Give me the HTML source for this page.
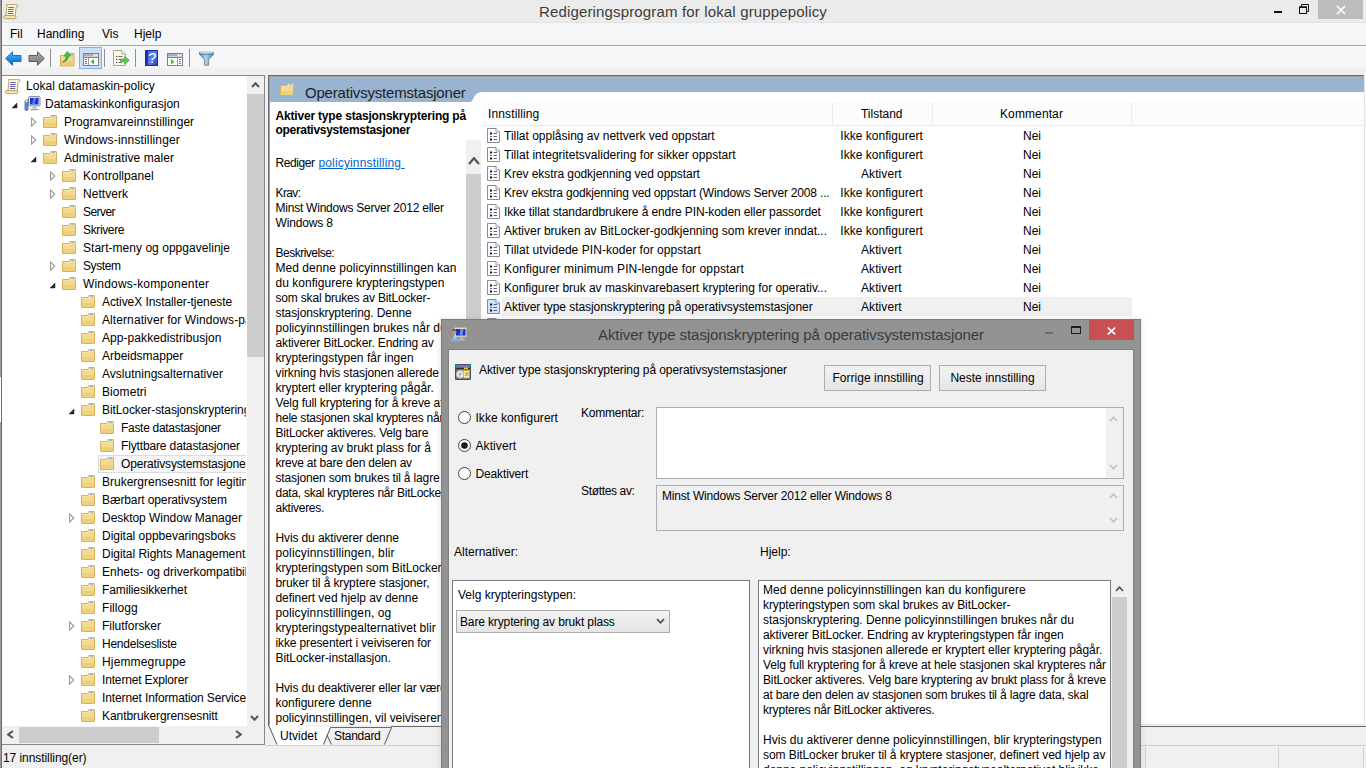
<!DOCTYPE html>
<html lang="nb"><head><meta charset="utf-8"><title>Redigeringsprogram for lokal gruppepolicy</title>
<style>
html,body{margin:0;padding:0;}
body{width:1366px;height:768px;overflow:hidden;position:relative;background:#fff;font-family:"Liberation Sans",sans-serif;font-size:12px;color:#000;}
div,span,svg{position:absolute;box-sizing:border-box;}
.t{white-space:pre;}
.clip{overflow:hidden;}
</style></head><body>
<div style="left:0px;top:0px;width:1366px;height:22px;background:#ebebeb;"></div>
<div style="left:0px;top:22px;width:1366px;height:1px;background:#e3e3e3;"></div>
<div style="left:0px;top:23px;width:1366px;height:22px;background:#f5f6f7;"></div>
<div style="left:0px;top:45px;width:1366px;height:1px;background:#ababab;"></div>
<div style="left:0px;top:46px;width:1366px;height:22px;background:#f5f6f7;"></div>
<div style="left:0px;top:68px;width:1366px;height:7px;background:#f0f0f0;"></div>
<div style="left:0px;top:75px;width:1366px;height:693px;background:#f0f0f0;"></div>
<span class="t" style="left:539px;top:2px;font-size:15px;line-height:20px;color:#3c3c3c;letter-spacing:0.151px;">Redigeringsprogram for lokal gruppepolicy</span>
<div style="left:1318px;top:0px;width:45px;height:19px;background:#bcbcbc;"></div>
<svg style="left:1336px;top:5px" width="10" height="10" viewBox="0 0 10 10"><path d="M1 1l8 8M9 1l-8 8" stroke="#fff" stroke-width="1.7" fill="none"/></svg>
<svg style="left:1298px;top:3px" width="12" height="12" viewBox="0 0 12 12"><path d="M3.5 3.5v-2h7v7h-2" stroke="#111" stroke-width="1" fill="none"/><rect x="1.5" y="4" width="7" height="6.5" stroke="#111" stroke-width="1" fill="none"/><rect x="1" y="3.5" width="8" height="1.5" fill="#111"/></svg>
<div style="left:1274px;top:11px;width:8px;height:2px;background:#111;"></div>
<span class="t" style="left:10px;top:26px;font-size:12px;line-height:16px;">Fil</span>
<span class="t" style="left:37px;top:26px;font-size:12px;line-height:16px;">Handling</span>
<span class="t" style="left:102px;top:26px;font-size:12px;line-height:16px;">Vis</span>
<span class="t" style="left:134px;top:26px;font-size:12px;line-height:16px;">Hjelp</span>
<svg style="left:3px;top:4px" width="16" height="16" viewBox="0 0 16 16"><path d="M3.600 .6h10.300c1.500 0 1.500 2.300 .1 2.300h-.9l-.9 9.200h-9.300l.9-9.600c.1-.8 .2-1.400-.2-1.900z" fill="#fdf7dc" stroke="#b39c5e" stroke-width=".9"/><path d="M1.800 11.600h10.200c1.300 0 1.300 3 0 3h-10.200c-1.500 0-1.500-3 0-3z" fill="#f6e9b4" stroke="#b39c5e" stroke-width=".9"/><path d="M5.300 3.500h5.500M5.200 5.500h5.500M5 7.500h5.500M4.800 9.500h5.500" stroke="#6662a6" stroke-width="1"/></svg>
<svg style="left:5px;top:51px" width="17" height="15" viewBox="0 0 17 15"><defs><linearGradient id="gb" x1="0" y1="0" x2="0" y2="1"><stop offset="0" stop-color="#56bdf6"/><stop offset=".5" stop-color="#1c8fe6"/><stop offset="1" stop-color="#0d63c6"/></linearGradient></defs><path d="M7.500 .8v3.700h8.500v6h-8.500v3.700l-6.800-6.700z" fill="url(#gb)" stroke="#1b6fc8" stroke-width="1" stroke-linejoin="round"/></svg>
<svg style="left:28px;top:51px" width="17" height="15" viewBox="0 0 17 15"><defs><linearGradient id="gg" x1="0" y1="0" x2="0" y2="1"><stop offset="0" stop-color="#a9a9a9"/><stop offset="1" stop-color="#7a7a7a"/></linearGradient></defs><path d="M9.500 .8v3.700h-8.500v6h8.500v3.700l6.800-6.700z" fill="url(#gg)" stroke="#5c5c5c" stroke-width="1" stroke-linejoin="round"/></svg>
<div style="left:50px;top:49px;width:1px;height:18px;background:#8f8f8f;"></div>
<div style="left:104px;top:49px;width:1px;height:18px;background:#8f8f8f;"></div>
<div style="left:135px;top:49px;width:1px;height:18px;background:#8f8f8f;"></div>
<div style="left:189px;top:49px;width:1px;height:18px;background:#8f8f8f;"></div>
<svg style="left:60px;top:50px" width="15" height="17" viewBox="0 0 15 17"><path d="M.5 5.500h6.500l1.200-2h5.800v12.500h-13.500z" fill="#f3d98e" stroke="#d3ad56"/><path d="M1 11h13v4.500h-13z" fill="#e9c364" opacity=".6"/><rect x="10" y="4.300" width="3" height="1.200" fill="#7db1e6"/><path d="M2.500 12c2.500-1 3.500-3.500 3.700-6h-2.200l3.300-4.500 3.200 4.500h-2c-.3 3.500-2.500 6-6 6z" fill="#46c33a" stroke="#2a9a22" stroke-width=".7"/></svg>
<div style="left:79px;top:47px;width:23px;height:22px;background:#cbe0f8;border:1px solid #7fb0ea;"></div>
<svg style="left:83px;top:53px" width="16" height="13" viewBox="0 0 16 13"><rect x=".5" y=".5" width="15" height="12" fill="#fff" stroke="#80808a"/><rect x="1" y="1" width="14" height="3" fill="#d0d0d6"/><path d="M1 2h9" stroke="#8a8a94"/><path d="M1 4.500h14" stroke="#80808a"/><rect x="11" y="1.500" width="1.200" height="1.200" fill="#fff"/><rect x="13" y="1.500" width="1.200" height="1.200" fill="#fff"/><path d="M5.500 5v7" stroke="#9a9aa2"/><path d="M2 6.500h2M2 8.500h2M2 10.500h2" stroke="#3f78d8" stroke-width="1"/><path d="M11 6l-3.500 2.700 3.500 2.700z" fill="#3fbf34"/></svg>
<svg style="left:113px;top:50px" width="17" height="16" viewBox="0 0 17 16"><path d="M.5 .5h8.500l3.500 3.500v11.500h-12z" fill="#fbf6dd" stroke="#a8a493"/><path d="M9 .5v3.500h3.500" fill="#fff" stroke="#a8a493" stroke-width=".9"/><path d="M3 6.500h1.200M3 9.500h1.200M3 12.500h1.200" stroke="#333" stroke-width="1.200"/><path d="M5.500 6.500h4M5.500 9.500h2M5.500 12.500h3.500" stroke="#6d6aa8" stroke-width="1"/><path d="M7.500 9h4.200v-2.300l4.600 3.600-4.600 3.600v-2.300h-4.200z" fill="#5ccb4c" stroke="#35a52b" stroke-width=".7"/></svg>
<svg style="left:145px;top:50px" width="13" height="16" viewBox="0 0 13 16"><defs><linearGradient id="gh" x1="0" y1="0" x2="1" y2="1"><stop offset="0" stop-color="#3a5ce0"/><stop offset=".55" stop-color="#5f7ff0"/><stop offset="1" stop-color="#2238b4"/></linearGradient></defs><rect x=".5" y=".5" width="12" height="15" fill="url(#gh)" stroke="#1c2c98"/><rect x="1" y="1" width="2" height="14" fill="#1f34a8"/><text x="7.400" y="13" font-family="Liberation Sans, sans-serif" font-size="14.500" fill="#fff" text-anchor="middle">?</text></svg>
<svg style="left:167px;top:53px" width="16" height="13" viewBox="0 0 16 13"><rect x=".5" y=".5" width="15" height="12" fill="#fff" stroke="#80808a"/><rect x="1" y="1" width="14" height="3" fill="#d0d0d6"/><path d="M1 2h9" stroke="#8a8a94"/><path d="M1 4.500h14" stroke="#80808a"/><rect x="11" y="1.500" width="1.200" height="1.200" fill="#fff"/><rect x="13" y="1.500" width="1.200" height="1.200" fill="#fff"/><path d="M10.500 5v7" stroke="#9a9aa2"/><path d="M12 6.500h2M12 8.500h2M12 10.500h2" stroke="#3f78d8" stroke-width="1"/><path d="M4 6l3.500 2.700-3.500 2.700z" fill="#3fbf34"/></svg>
<svg style="left:199px;top:51px" width="15" height="15" viewBox="0 0 15 15"><defs><linearGradient id="gf" x1="0" y1="0" x2="1" y2="0"><stop offset="0" stop-color="#5588ad"/><stop offset=".45" stop-color="#b4d0e4"/><stop offset="1" stop-color="#4f80a6"/></linearGradient></defs><path d="M.4 1.200h14.200v2l-5 5.300v5.700h-4.200v-5.700l-5-5.300z" fill="url(#gf)" stroke="#54809f" stroke-width=".8" stroke-linejoin="round"/><path d="M1 1.800h13" stroke="#e4eef6" stroke-width="1"/><path d="M.8 3.300h13.400" stroke="#4f7c9c" stroke-width=".8"/></svg>
<div style="left:0px;top:0px;width:1px;height:768px;background:#9a9a9a;"></div>
<div style="left:1px;top:0px;width:1px;height:768px;background:#6c6c6c;"></div>
<div style="left:0px;top:377px;width:1px;height:45px;background:#fff;"></div>
<div style="left:2px;top:75px;width:263px;height:1px;background:#828790;"></div>
<div style="left:2px;top:76px;width:262px;height:668px;background:#fff;"></div>
<div style="left:264px;top:76px;width:1px;height:669px;background:#828790;"></div>
<div style="left:2px;top:744px;width:263px;height:1px;background:#828790;"></div>
<div class="clip" style="left:2px;top:76px;width:244px;height:650px;">
<svg style="left:3px;top:3px" width="16" height="16" viewBox="0 0 16 16"><path d="M3.600 .6h10.300c1.500 0 1.500 2.300 .1 2.300h-.9l-.9 9.200h-9.300l.9-9.600c.1-.8 .2-1.400-.2-1.900z" fill="#fdf7dc" stroke="#b39c5e" stroke-width=".9"/><path d="M1.800 11.600h10.200c1.300 0 1.300 3 0 3h-10.200c-1.500 0-1.500-3 0-3z" fill="#f6e9b4" stroke="#b39c5e" stroke-width=".9"/><path d="M5.300 3.500h5.500M5.200 5.500h5.500M5 7.500h5.500M4.800 9.500h5.500" stroke="#6662a6" stroke-width="1"/></svg>
<span class="t" style="left:24px;top:2px;font-size:12px;line-height:16px;letter-spacing:0.028px;">Lokal datamaskin-policy</span>
<svg style="left:9px;top:26px" width="7" height="7" viewBox="0 0 7 7"><path d="M6 1v5h-5z" fill="#262626" stroke="#262626" stroke-width=".5"/></svg>
<svg style="left:22px;top:20px" width="17" height="16" viewBox="0 0 17 16"><rect x="4.500" y=".5" width="11.500" height="9.500" rx="1" fill="#d9dde2" stroke="#8a9098"/><rect x="6" y="2" width="8.500" height="6.500" fill="#1738d8"/><path d="M9.500 2h2.500l-1.500 6.500h-2.500z" fill="#6f8df5" opacity=".8"/><path d="M8.500 10.500h4v2h-4z" fill="#b9bec5"/><path d="M6.500 13.500h8" stroke="#9aa0a8" stroke-width="1.500"/><rect x="1" y="4.500" width="3" height="10" rx="1.300" fill="#5b8fdc" stroke="#3a66b0" stroke-width=".8"/><circle cx="2.500" cy="5" r="1.500" fill="#e8e8e8" stroke="#777" stroke-width=".6"/></svg>
<span class="t" style="left:43px;top:20px;font-size:12px;line-height:16px;">Datamaskinkonfigurasjon</span>
<svg style="left:29px;top:41px" width="6" height="10" viewBox="0 0 6 10"><path d="M.6 .9l4.200 4.100-4.200 4.100z" fill="#fff" stroke="#989898" stroke-width="1.100"/></svg>
<svg style="left:41px;top:39px" width="14" height="13" viewBox="0 0 14 13"><path d="M.5 2.500h6.200l1.200-2h5.100c.3 0 .5.200.5.500v11c0 .3-.2.500-.5.500h-12c-.3 0-.5-.2-.5-.5z" fill="#f3da90" stroke="#d6b25a" stroke-width="1"/><path d="M1.500 3.500h5.700l1.200-2h4.100v1.500h-11z" fill="#fbefc0"/><rect x="9" y="1.200" width="3" height="1.200" fill="#8ab9ea"/><path d="M1 8h12v4h-12z" fill="#eac566" opacity=".5"/></svg>
<span class="t" style="left:62px;top:38px;font-size:12px;line-height:16px;letter-spacing:0.030px;">Programvareinnstillinger</span>
<svg style="left:29px;top:59px" width="6" height="10" viewBox="0 0 6 10"><path d="M.6 .9l4.200 4.100-4.200 4.100z" fill="#fff" stroke="#989898" stroke-width="1.100"/></svg>
<svg style="left:41px;top:57px" width="14" height="13" viewBox="0 0 14 13"><path d="M.5 2.500h6.200l1.200-2h5.100c.3 0 .5.200.5.500v11c0 .3-.2.500-.5.500h-12c-.3 0-.5-.2-.5-.5z" fill="#f3da90" stroke="#d6b25a" stroke-width="1"/><path d="M1.500 3.500h5.700l1.200-2h4.100v1.500h-11z" fill="#fbefc0"/><rect x="9" y="1.200" width="3" height="1.200" fill="#8ab9ea"/><path d="M1 8h12v4h-12z" fill="#eac566" opacity=".5"/></svg>
<span class="t" style="left:62px;top:56px;font-size:12px;line-height:16px;letter-spacing:0.156px;">Windows-innstillinger</span>
<svg style="left:28px;top:80px" width="7" height="7" viewBox="0 0 7 7"><path d="M6 1v5h-5z" fill="#262626" stroke="#262626" stroke-width=".5"/></svg>
<svg style="left:41px;top:75px" width="14" height="13" viewBox="0 0 14 13"><path d="M.5 2.500h6.200l1.200-2h5.100c.3 0 .5.200.5.500v11c0 .3-.2.500-.5.500h-12c-.3 0-.5-.2-.5-.5z" fill="#f3da90" stroke="#d6b25a" stroke-width="1"/><path d="M1.500 3.500h5.700l1.200-2h4.100v1.500h-11z" fill="#fbefc0"/><rect x="9" y="1.200" width="3" height="1.200" fill="#8ab9ea"/><path d="M1 8h12v4h-12z" fill="#eac566" opacity=".5"/></svg>
<span class="t" style="left:62px;top:74px;font-size:12px;line-height:16px;letter-spacing:0.065px;">Administrative maler</span>
<svg style="left:48px;top:95px" width="6" height="10" viewBox="0 0 6 10"><path d="M.6 .9l4.200 4.100-4.200 4.100z" fill="#fff" stroke="#989898" stroke-width="1.100"/></svg>
<svg style="left:60px;top:93px" width="14" height="13" viewBox="0 0 14 13"><path d="M.5 2.500h6.200l1.200-2h5.100c.3 0 .5.200.5.500v11c0 .3-.2.500-.5.500h-12c-.3 0-.5-.2-.5-.5z" fill="#f3da90" stroke="#d6b25a" stroke-width="1"/><path d="M1.500 3.500h5.700l1.200-2h4.100v1.500h-11z" fill="#fbefc0"/><rect x="9" y="1.200" width="3" height="1.200" fill="#8ab9ea"/><path d="M1 8h12v4h-12z" fill="#eac566" opacity=".5"/></svg>
<span class="t" style="left:81px;top:92px;font-size:12px;line-height:16px;letter-spacing:0.049px;">Kontrollpanel</span>
<svg style="left:48px;top:113px" width="6" height="10" viewBox="0 0 6 10"><path d="M.6 .9l4.200 4.100-4.200 4.100z" fill="#fff" stroke="#989898" stroke-width="1.100"/></svg>
<svg style="left:60px;top:111px" width="14" height="13" viewBox="0 0 14 13"><path d="M.5 2.500h6.200l1.200-2h5.100c.3 0 .5.200.5.500v11c0 .3-.2.500-.5.500h-12c-.3 0-.5-.2-.5-.5z" fill="#f3da90" stroke="#d6b25a" stroke-width="1"/><path d="M1.500 3.500h5.700l1.200-2h4.100v1.500h-11z" fill="#fbefc0"/><rect x="9" y="1.200" width="3" height="1.200" fill="#8ab9ea"/><path d="M1 8h12v4h-12z" fill="#eac566" opacity=".5"/></svg>
<span class="t" style="left:81px;top:110px;font-size:12px;line-height:16px;letter-spacing:0.039px;">Nettverk</span>
<svg style="left:60px;top:129px" width="14" height="13" viewBox="0 0 14 13"><path d="M.5 2.500h6.200l1.200-2h5.100c.3 0 .5.200.5.500v11c0 .3-.2.500-.5.500h-12c-.3 0-.5-.2-.5-.5z" fill="#f3da90" stroke="#d6b25a" stroke-width="1"/><path d="M1.500 3.500h5.700l1.200-2h4.100v1.500h-11z" fill="#fbefc0"/><rect x="9" y="1.200" width="3" height="1.200" fill="#8ab9ea"/><path d="M1 8h12v4h-12z" fill="#eac566" opacity=".5"/></svg>
<span class="t" style="left:81px;top:128px;font-size:12px;line-height:16px;letter-spacing:-0.557px;">Server</span>
<svg style="left:60px;top:147px" width="14" height="13" viewBox="0 0 14 13"><path d="M.5 2.500h6.200l1.200-2h5.100c.3 0 .5.200.5.500v11c0 .3-.2.500-.5.500h-12c-.3 0-.5-.2-.5-.5z" fill="#f3da90" stroke="#d6b25a" stroke-width="1"/><path d="M1.500 3.500h5.700l1.200-2h4.100v1.500h-11z" fill="#fbefc0"/><rect x="9" y="1.200" width="3" height="1.200" fill="#8ab9ea"/><path d="M1 8h12v4h-12z" fill="#eac566" opacity=".5"/></svg>
<span class="t" style="left:81px;top:146px;font-size:12px;line-height:16px;letter-spacing:-0.364px;">Skrivere</span>
<svg style="left:60px;top:165px" width="14" height="13" viewBox="0 0 14 13"><path d="M.5 2.500h6.200l1.200-2h5.100c.3 0 .5.200.5.500v11c0 .3-.2.500-.5.500h-12c-.3 0-.5-.2-.5-.5z" fill="#f3da90" stroke="#d6b25a" stroke-width="1"/><path d="M1.500 3.500h5.700l1.200-2h4.100v1.500h-11z" fill="#fbefc0"/><rect x="9" y="1.200" width="3" height="1.200" fill="#8ab9ea"/><path d="M1 8h12v4h-12z" fill="#eac566" opacity=".5"/></svg>
<span class="t" style="left:81px;top:164px;font-size:12px;line-height:16px;letter-spacing:0.035px;">Start-meny og oppgavelinje</span>
<svg style="left:48px;top:185px" width="6" height="10" viewBox="0 0 6 10"><path d="M.6 .9l4.200 4.100-4.200 4.100z" fill="#fff" stroke="#989898" stroke-width="1.100"/></svg>
<svg style="left:60px;top:183px" width="14" height="13" viewBox="0 0 14 13"><path d="M.5 2.500h6.200l1.200-2h5.100c.3 0 .5.200.5.500v11c0 .3-.2.500-.5.500h-12c-.3 0-.5-.2-.5-.5z" fill="#f3da90" stroke="#d6b25a" stroke-width="1"/><path d="M1.500 3.500h5.700l1.200-2h4.100v1.500h-11z" fill="#fbefc0"/><rect x="9" y="1.200" width="3" height="1.200" fill="#8ab9ea"/><path d="M1 8h12v4h-12z" fill="#eac566" opacity=".5"/></svg>
<span class="t" style="left:81px;top:182px;font-size:12px;line-height:16px;letter-spacing:-0.403px;">System</span>
<svg style="left:47px;top:206px" width="7" height="7" viewBox="0 0 7 7"><path d="M6 1v5h-5z" fill="#262626" stroke="#262626" stroke-width=".5"/></svg>
<svg style="left:60px;top:201px" width="14" height="13" viewBox="0 0 14 13"><path d="M.5 2.500h6.200l1.200-2h5.100c.3 0 .5.200.5.500v11c0 .3-.2.500-.5.500h-12c-.3 0-.5-.2-.5-.5z" fill="#f3da90" stroke="#d6b25a" stroke-width="1"/><path d="M1.500 3.500h5.700l1.200-2h4.100v1.500h-11z" fill="#fbefc0"/><rect x="9" y="1.200" width="3" height="1.200" fill="#8ab9ea"/><path d="M1 8h12v4h-12z" fill="#eac566" opacity=".5"/></svg>
<span class="t" style="left:81px;top:200px;font-size:12px;line-height:16px;letter-spacing:0.183px;">Windows-komponenter</span>
<svg style="left:79px;top:219px" width="14" height="13" viewBox="0 0 14 13"><path d="M.5 2.500h6.200l1.200-2h5.100c.3 0 .5.200.5.500v11c0 .3-.2.500-.5.500h-12c-.3 0-.5-.2-.5-.5z" fill="#f3da90" stroke="#d6b25a" stroke-width="1"/><path d="M1.500 3.500h5.700l1.200-2h4.100v1.500h-11z" fill="#fbefc0"/><rect x="9" y="1.200" width="3" height="1.200" fill="#8ab9ea"/><path d="M1 8h12v4h-12z" fill="#eac566" opacity=".5"/></svg>
<span class="t" style="left:100px;top:218px;font-size:12px;line-height:16px;letter-spacing:-0.079px;">ActiveX Installer-tjeneste</span>
<svg style="left:79px;top:237px" width="14" height="13" viewBox="0 0 14 13"><path d="M.5 2.500h6.200l1.200-2h5.100c.3 0 .5.200.5.500v11c0 .3-.2.500-.5.500h-12c-.3 0-.5-.2-.5-.5z" fill="#f3da90" stroke="#d6b25a" stroke-width="1"/><path d="M1.500 3.500h5.700l1.200-2h4.100v1.500h-11z" fill="#fbefc0"/><rect x="9" y="1.200" width="3" height="1.200" fill="#8ab9ea"/><path d="M1 8h12v4h-12z" fill="#eac566" opacity=".5"/></svg>
<span class="t" style="left:100px;top:236px;font-size:12px;line-height:16px;letter-spacing:0.088px;">Alternativer for Windows-påloggingsinformasjon</span>
<svg style="left:79px;top:255px" width="14" height="13" viewBox="0 0 14 13"><path d="M.5 2.500h6.200l1.200-2h5.100c.3 0 .5.200.5.500v11c0 .3-.2.500-.5.500h-12c-.3 0-.5-.2-.5-.5z" fill="#f3da90" stroke="#d6b25a" stroke-width="1"/><path d="M1.500 3.500h5.700l1.200-2h4.100v1.500h-11z" fill="#fbefc0"/><rect x="9" y="1.200" width="3" height="1.200" fill="#8ab9ea"/><path d="M1 8h12v4h-12z" fill="#eac566" opacity=".5"/></svg>
<span class="t" style="left:100px;top:254px;font-size:12px;line-height:16px;letter-spacing:0.068px;">App-pakkedistribusjon</span>
<svg style="left:79px;top:273px" width="14" height="13" viewBox="0 0 14 13"><path d="M.5 2.500h6.200l1.200-2h5.100c.3 0 .5.200.5.500v11c0 .3-.2.500-.5.500h-12c-.3 0-.5-.2-.5-.5z" fill="#f3da90" stroke="#d6b25a" stroke-width="1"/><path d="M1.500 3.500h5.700l1.200-2h4.100v1.500h-11z" fill="#fbefc0"/><rect x="9" y="1.200" width="3" height="1.200" fill="#8ab9ea"/><path d="M1 8h12v4h-12z" fill="#eac566" opacity=".5"/></svg>
<span class="t" style="left:100px;top:272px;font-size:12px;line-height:16px;letter-spacing:-0.013px;">Arbeidsmapper</span>
<svg style="left:79px;top:291px" width="14" height="13" viewBox="0 0 14 13"><path d="M.5 2.500h6.200l1.200-2h5.100c.3 0 .5.200.5.500v11c0 .3-.2.500-.5.500h-12c-.3 0-.5-.2-.5-.5z" fill="#f3da90" stroke="#d6b25a" stroke-width="1"/><path d="M1.500 3.500h5.700l1.200-2h4.100v1.500h-11z" fill="#fbefc0"/><rect x="9" y="1.200" width="3" height="1.200" fill="#8ab9ea"/><path d="M1 8h12v4h-12z" fill="#eac566" opacity=".5"/></svg>
<span class="t" style="left:100px;top:290px;font-size:12px;line-height:16px;letter-spacing:0.017px;">Avslutningsalternativer</span>
<svg style="left:79px;top:309px" width="14" height="13" viewBox="0 0 14 13"><path d="M.5 2.500h6.200l1.200-2h5.100c.3 0 .5.200.5.500v11c0 .3-.2.500-.5.500h-12c-.3 0-.5-.2-.5-.5z" fill="#f3da90" stroke="#d6b25a" stroke-width="1"/><path d="M1.500 3.500h5.700l1.200-2h4.100v1.500h-11z" fill="#fbefc0"/><rect x="9" y="1.200" width="3" height="1.200" fill="#8ab9ea"/><path d="M1 8h12v4h-12z" fill="#eac566" opacity=".5"/></svg>
<span class="t" style="left:100px;top:308px;font-size:12px;line-height:16px;letter-spacing:0.073px;">Biometri</span>
<svg style="left:66px;top:332px" width="7" height="7" viewBox="0 0 7 7"><path d="M6 1v5h-5z" fill="#262626" stroke="#262626" stroke-width=".5"/></svg>
<svg style="left:79px;top:327px" width="14" height="13" viewBox="0 0 14 13"><path d="M.5 2.500h6.200l1.200-2h5.100c.3 0 .5.200.5.500v11c0 .3-.2.500-.5.500h-12c-.3 0-.5-.2-.5-.5z" fill="#f3da90" stroke="#d6b25a" stroke-width="1"/><path d="M1.500 3.500h5.700l1.200-2h4.100v1.500h-11z" fill="#fbefc0"/><rect x="9" y="1.200" width="3" height="1.200" fill="#8ab9ea"/><path d="M1 8h12v4h-12z" fill="#eac566" opacity=".5"/></svg>
<span class="t" style="left:100px;top:326px;font-size:12px;line-height:16px;letter-spacing:-0.088px;">BitLocker-stasjonskryptering</span>
<svg style="left:98px;top:345px" width="14" height="13" viewBox="0 0 14 13"><path d="M.5 2.500h6.200l1.200-2h5.100c.3 0 .5.200.5.500v11c0 .3-.2.500-.5.500h-12c-.3 0-.5-.2-.5-.5z" fill="#f3da90" stroke="#d6b25a" stroke-width="1"/><path d="M1.500 3.500h5.700l1.200-2h4.100v1.500h-11z" fill="#fbefc0"/><rect x="9" y="1.200" width="3" height="1.200" fill="#8ab9ea"/><path d="M1 8h12v4h-12z" fill="#eac566" opacity=".5"/></svg>
<span class="t" style="left:119px;top:344px;font-size:12px;line-height:16px;letter-spacing:-0.295px;">Faste datastasjoner</span>
<svg style="left:98px;top:363px" width="14" height="13" viewBox="0 0 14 13"><path d="M.5 2.500h6.200l1.200-2h5.100c.3 0 .5.200.5.500v11c0 .3-.2.500-.5.500h-12c-.3 0-.5-.2-.5-.5z" fill="#f3da90" stroke="#d6b25a" stroke-width="1"/><path d="M1.500 3.500h5.700l1.200-2h4.100v1.500h-11z" fill="#fbefc0"/><rect x="9" y="1.200" width="3" height="1.200" fill="#8ab9ea"/><path d="M1 8h12v4h-12z" fill="#eac566" opacity=".5"/></svg>
<span class="t" style="left:119px;top:362px;font-size:12px;line-height:16px;letter-spacing:-0.142px;">Flyttbare datastasjoner</span>
<div style="left:96px;top:379px;width:200px;height:18px;background:#f6f6f6;border:1px solid #dcdcdc;"></div>
<svg style="left:98px;top:381px" width="14" height="13" viewBox="0 0 14 13"><path d="M.5 2.500h6.200l1.200-2h5.100c.3 0 .5.200.5.500v11c0 .3-.2.500-.5.500h-12c-.3 0-.5-.2-.5-.5z" fill="#f3da90" stroke="#d6b25a" stroke-width="1"/><path d="M1.500 3.500h5.700l1.200-2h4.100v1.500h-11z" fill="#fbefc0"/><rect x="9" y="1.200" width="3" height="1.200" fill="#8ab9ea"/><path d="M1 8h12v4h-12z" fill="#eac566" opacity=".5"/></svg>
<span class="t" style="left:119px;top:380px;font-size:12px;line-height:16px;letter-spacing:-0.162px;">Operativsystemstasjoner</span>
<svg style="left:79px;top:399px" width="14" height="13" viewBox="0 0 14 13"><path d="M.5 2.500h6.200l1.200-2h5.100c.3 0 .5.200.5.500v11c0 .3-.2.500-.5.500h-12c-.3 0-.5-.2-.5-.5z" fill="#f3da90" stroke="#d6b25a" stroke-width="1"/><path d="M1.500 3.500h5.700l1.200-2h4.100v1.500h-11z" fill="#fbefc0"/><rect x="9" y="1.200" width="3" height="1.200" fill="#8ab9ea"/><path d="M1 8h12v4h-12z" fill="#eac566" opacity=".5"/></svg>
<span class="t" style="left:100px;top:398px;font-size:12px;line-height:16px;">Brukergrensesnitt for legitimasjon</span>
<svg style="left:79px;top:417px" width="14" height="13" viewBox="0 0 14 13"><path d="M.5 2.500h6.200l1.200-2h5.100c.3 0 .5.200.5.500v11c0 .3-.2.500-.5.500h-12c-.3 0-.5-.2-.5-.5z" fill="#f3da90" stroke="#d6b25a" stroke-width="1"/><path d="M1.500 3.500h5.700l1.200-2h4.100v1.500h-11z" fill="#fbefc0"/><rect x="9" y="1.200" width="3" height="1.200" fill="#8ab9ea"/><path d="M1 8h12v4h-12z" fill="#eac566" opacity=".5"/></svg>
<span class="t" style="left:100px;top:416px;font-size:12px;line-height:16px;letter-spacing:-0.118px;">Bærbart operativsystem</span>
<svg style="left:67px;top:437px" width="6" height="10" viewBox="0 0 6 10"><path d="M.6 .9l4.200 4.100-4.200 4.100z" fill="#fff" stroke="#989898" stroke-width="1.100"/></svg>
<svg style="left:79px;top:435px" width="14" height="13" viewBox="0 0 14 13"><path d="M.5 2.500h6.200l1.200-2h5.100c.3 0 .5.200.5.500v11c0 .3-.2.500-.5.500h-12c-.3 0-.5-.2-.5-.5z" fill="#f3da90" stroke="#d6b25a" stroke-width="1"/><path d="M1.500 3.500h5.700l1.200-2h4.100v1.500h-11z" fill="#fbefc0"/><rect x="9" y="1.200" width="3" height="1.200" fill="#8ab9ea"/><path d="M1 8h12v4h-12z" fill="#eac566" opacity=".5"/></svg>
<span class="t" style="left:100px;top:434px;font-size:12px;line-height:16px;letter-spacing:-0.038px;">Desktop Window Manager</span>
<svg style="left:79px;top:453px" width="14" height="13" viewBox="0 0 14 13"><path d="M.5 2.500h6.200l1.200-2h5.100c.3 0 .5.200.5.500v11c0 .3-.2.500-.5.500h-12c-.3 0-.5-.2-.5-.5z" fill="#f3da90" stroke="#d6b25a" stroke-width="1"/><path d="M1.500 3.500h5.700l1.200-2h4.100v1.500h-11z" fill="#fbefc0"/><rect x="9" y="1.200" width="3" height="1.200" fill="#8ab9ea"/><path d="M1 8h12v4h-12z" fill="#eac566" opacity=".5"/></svg>
<span class="t" style="left:100px;top:452px;font-size:12px;line-height:16px;letter-spacing:-0.012px;">Digital oppbevaringsboks</span>
<svg style="left:79px;top:471px" width="14" height="13" viewBox="0 0 14 13"><path d="M.5 2.500h6.200l1.200-2h5.100c.3 0 .5.200.5.500v11c0 .3-.2.500-.5.500h-12c-.3 0-.5-.2-.5-.5z" fill="#f3da90" stroke="#d6b25a" stroke-width="1"/><path d="M1.500 3.500h5.700l1.200-2h4.100v1.500h-11z" fill="#fbefc0"/><rect x="9" y="1.200" width="3" height="1.200" fill="#8ab9ea"/><path d="M1 8h12v4h-12z" fill="#eac566" opacity=".5"/></svg>
<span class="t" style="left:100px;top:470px;font-size:12px;line-height:16px;letter-spacing:-0.035px;">Digital Rights Management for Windows Media</span>
<svg style="left:79px;top:489px" width="14" height="13" viewBox="0 0 14 13"><path d="M.5 2.500h6.200l1.200-2h5.100c.3 0 .5.200.5.500v11c0 .3-.2.500-.5.500h-12c-.3 0-.5-.2-.5-.5z" fill="#f3da90" stroke="#d6b25a" stroke-width="1"/><path d="M1.500 3.500h5.700l1.200-2h4.100v1.500h-11z" fill="#fbefc0"/><rect x="9" y="1.200" width="3" height="1.200" fill="#8ab9ea"/><path d="M1 8h12v4h-12z" fill="#eac566" opacity=".5"/></svg>
<span class="t" style="left:100px;top:488px;font-size:12px;line-height:16px;">Enhets- og driverkompatibilitet</span>
<svg style="left:79px;top:507px" width="14" height="13" viewBox="0 0 14 13"><path d="M.5 2.500h6.200l1.200-2h5.100c.3 0 .5.200.5.500v11c0 .3-.2.500-.5.500h-12c-.3 0-.5-.2-.5-.5z" fill="#f3da90" stroke="#d6b25a" stroke-width="1"/><path d="M1.500 3.500h5.700l1.200-2h4.100v1.500h-11z" fill="#fbefc0"/><rect x="9" y="1.200" width="3" height="1.200" fill="#8ab9ea"/><path d="M1 8h12v4h-12z" fill="#eac566" opacity=".5"/></svg>
<span class="t" style="left:100px;top:506px;font-size:12px;line-height:16px;letter-spacing:-0.113px;">Familiesikkerhet</span>
<svg style="left:79px;top:525px" width="14" height="13" viewBox="0 0 14 13"><path d="M.5 2.500h6.200l1.200-2h5.100c.3 0 .5.200.5.500v11c0 .3-.2.500-.5.500h-12c-.3 0-.5-.2-.5-.5z" fill="#f3da90" stroke="#d6b25a" stroke-width="1"/><path d="M1.500 3.500h5.700l1.200-2h4.100v1.500h-11z" fill="#fbefc0"/><rect x="9" y="1.200" width="3" height="1.200" fill="#8ab9ea"/><path d="M1 8h12v4h-12z" fill="#eac566" opacity=".5"/></svg>
<span class="t" style="left:100px;top:524px;font-size:12px;line-height:16px;letter-spacing:0.049px;">Fillogg</span>
<svg style="left:67px;top:545px" width="6" height="10" viewBox="0 0 6 10"><path d="M.6 .9l4.200 4.100-4.200 4.100z" fill="#fff" stroke="#989898" stroke-width="1.100"/></svg>
<svg style="left:79px;top:543px" width="14" height="13" viewBox="0 0 14 13"><path d="M.5 2.500h6.200l1.200-2h5.100c.3 0 .5.200.5.500v11c0 .3-.2.500-.5.500h-12c-.3 0-.5-.2-.5-.5z" fill="#f3da90" stroke="#d6b25a" stroke-width="1"/><path d="M1.500 3.500h5.700l1.200-2h4.100v1.500h-11z" fill="#fbefc0"/><rect x="9" y="1.200" width="3" height="1.200" fill="#8ab9ea"/><path d="M1 8h12v4h-12z" fill="#eac566" opacity=".5"/></svg>
<span class="t" style="left:100px;top:542px;font-size:12px;line-height:16px;letter-spacing:-0.037px;">Filutforsker</span>
<svg style="left:79px;top:561px" width="14" height="13" viewBox="0 0 14 13"><path d="M.5 2.500h6.200l1.200-2h5.100c.3 0 .5.200.5.500v11c0 .3-.2.500-.5.500h-12c-.3 0-.5-.2-.5-.5z" fill="#f3da90" stroke="#d6b25a" stroke-width="1"/><path d="M1.500 3.500h5.700l1.200-2h4.100v1.500h-11z" fill="#fbefc0"/><rect x="9" y="1.200" width="3" height="1.200" fill="#8ab9ea"/><path d="M1 8h12v4h-12z" fill="#eac566" opacity=".5"/></svg>
<span class="t" style="left:100px;top:560px;font-size:12px;line-height:16px;letter-spacing:-0.239px;">Hendelsesliste</span>
<svg style="left:79px;top:579px" width="14" height="13" viewBox="0 0 14 13"><path d="M.5 2.500h6.200l1.200-2h5.100c.3 0 .5.200.5.500v11c0 .3-.2.500-.5.500h-12c-.3 0-.5-.2-.5-.5z" fill="#f3da90" stroke="#d6b25a" stroke-width="1"/><path d="M1.500 3.500h5.700l1.200-2h4.100v1.500h-11z" fill="#fbefc0"/><rect x="9" y="1.200" width="3" height="1.200" fill="#8ab9ea"/><path d="M1 8h12v4h-12z" fill="#eac566" opacity=".5"/></svg>
<span class="t" style="left:100px;top:578px;font-size:12px;line-height:16px;letter-spacing:0.154px;">Hjemmegruppe</span>
<svg style="left:67px;top:599px" width="6" height="10" viewBox="0 0 6 10"><path d="M.6 .9l4.200 4.100-4.200 4.100z" fill="#fff" stroke="#989898" stroke-width="1.100"/></svg>
<svg style="left:79px;top:597px" width="14" height="13" viewBox="0 0 14 13"><path d="M.5 2.500h6.200l1.200-2h5.100c.3 0 .5.200.5.500v11c0 .3-.2.500-.5.500h-12c-.3 0-.5-.2-.5-.5z" fill="#f3da90" stroke="#d6b25a" stroke-width="1"/><path d="M1.500 3.500h5.700l1.200-2h4.100v1.500h-11z" fill="#fbefc0"/><rect x="9" y="1.200" width="3" height="1.200" fill="#8ab9ea"/><path d="M1 8h12v4h-12z" fill="#eac566" opacity=".5"/></svg>
<span class="t" style="left:100px;top:596px;font-size:12px;line-height:16px;letter-spacing:-0.160px;">Internet Explorer</span>
<svg style="left:79px;top:615px" width="14" height="13" viewBox="0 0 14 13"><path d="M.5 2.500h6.200l1.200-2h5.100c.3 0 .5.200.5.500v11c0 .3-.2.500-.5.500h-12c-.3 0-.5-.2-.5-.5z" fill="#f3da90" stroke="#d6b25a" stroke-width="1"/><path d="M1.500 3.500h5.700l1.200-2h4.100v1.500h-11z" fill="#fbefc0"/><rect x="9" y="1.200" width="3" height="1.200" fill="#8ab9ea"/><path d="M1 8h12v4h-12z" fill="#eac566" opacity=".5"/></svg>
<span class="t" style="left:100px;top:614px;font-size:12px;line-height:16px;letter-spacing:-0.122px;">Internet Information Services</span>
<svg style="left:79px;top:633px" width="14" height="13" viewBox="0 0 14 13"><path d="M.5 2.500h6.200l1.200-2h5.100c.3 0 .5.200.5.500v11c0 .3-.2.500-.5.500h-12c-.3 0-.5-.2-.5-.5z" fill="#f3da90" stroke="#d6b25a" stroke-width="1"/><path d="M1.500 3.500h5.700l1.200-2h4.100v1.500h-11z" fill="#fbefc0"/><rect x="9" y="1.200" width="3" height="1.200" fill="#8ab9ea"/><path d="M1 8h12v4h-12z" fill="#eac566" opacity=".5"/></svg>
<span class="t" style="left:100px;top:632px;font-size:12px;line-height:16px;letter-spacing:-0.072px;">Kantbrukergrensesnitt</span>
</div>
<div style="left:247px;top:76px;width:17px;height:650px;background:#f0f0f0;"></div>
<div style="left:247px;top:94px;width:17px;height:263px;background:#cdcdcd;"></div>
<svg style="left:251px;top:82px" width="9" height="6" viewBox="0 0 9 6"><path d="M1 5L4.5 1.2L8 5" fill="none" stroke="#555" stroke-width="2"/></svg>
<svg style="left:250px;top:715px" width="9" height="6" viewBox="0 0 9 6"><path d="M1 1L4.5 4.8L8 1" fill="none" stroke="#555" stroke-width="2"/></svg>
<div style="left:2px;top:726px;width:262px;height:18px;background:#f0f0f0;"></div>
<div style="left:19px;top:727px;width:140px;height:16px;background:#cdcdcd;"></div>
<svg style="left:7px;top:730px" width="7" height="9" viewBox="0 0 7 9"><path d="M6 1L1.2 4.5L6 8" fill="none" stroke="#555" stroke-width="2.1"/></svg>
<svg style="left:235px;top:730px" width="7" height="9" viewBox="0 0 7 9"><path d="M1 1L5.8 4.5L1 8" fill="none" stroke="#555" stroke-width="2.1"/></svg>
<div style="left:265px;top:745px;width:1101px;height:1px;background:#cfcfcf;"></div>
<span class="t" style="left:3px;top:750px;font-size:12px;line-height:16px;letter-spacing:-0.067px;">17 innstilling(er)</span>
<div style="left:1145px;top:747px;width:1px;height:20px;background:#d0d0d0;"></div>
<div style="left:1278px;top:747px;width:1px;height:20px;background:#d0d0d0;"></div>
<div style="left:1363px;top:747px;width:1px;height:20px;background:#d0d0d0;"></div>
<div style="left:268px;top:75px;width:1096px;height:1px;background:#696969;"></div>
<div style="left:268px;top:76px;width:1px;height:650px;background:#696969;"></div>
<div style="left:269px;top:76px;width:1095px;height:1px;background:#a0a0a0;"></div>
<div style="left:269px;top:77px;width:1px;height:649px;background:#a0a0a0;"></div>
<div style="left:270px;top:77px;width:1094px;height:648px;background:#fff;"></div>
<div style="left:1364px;top:75px;width:2px;height:670px;background:#fcfcfc;"></div>
<div style="left:1364px;top:77px;width:1px;height:648px;background:#e3e3e3;"></div>
<div style="left:270px;top:77px;width:1094px;height:25px;background:#99b4d1;"></div>
<svg style="left:470px;top:92px" width="14" height="10" viewBox="0 0 14 10"><path d="M0 10C4 10 3 0 12 0h2v10z" fill="#fff"/></svg>
<div style="left:482px;top:92px;width:882px;height:10px;background:#fff;"></div>
<svg style="left:280px;top:83px" width="14" height="13" viewBox="0 0 14 13"><path d="M.5 2.500h6.200l1.200-2h5.100c.3 0 .5.200.5.500v11c0 .3-.2.500-.5.500h-12c-.3 0-.5-.2-.5-.5z" fill="#f3da90" stroke="#d6b25a" stroke-width="1"/><path d="M1.500 3.500h5.700l1.200-2h4.100v1.500h-11z" fill="#fbefc0"/><rect x="9" y="1.200" width="3" height="1.200" fill="#8ab9ea"/><path d="M1 8h12v4h-12z" fill="#eac566" opacity=".5"/></svg>
<span class="t" style="left:305px;top:83px;font-size:15px;line-height:20px;color:#1e1e1e;letter-spacing:-0.194px;">Operativsystemstasjoner</span>
<span class="t" style="left:275.5px;top:107.5px;font-size:12px;line-height:16px;font-weight:bold;letter-spacing:-0.183px;">Aktiver type stasjonskryptering på</span>
<span class="t" style="left:275.5px;top:122px;font-size:12px;line-height:16px;font-weight:bold;letter-spacing:-0.300px;">operativsystemstasjoner</span>
<span class="t" style="left:275.5px;top:155px;font-size:12px;line-height:16px;letter-spacing:-0.404px;">Rediger </span>
<span class="t" style="left:318.4px;top:155px;font-size:12px;line-height:16px;color:#0066cc;letter-spacing:0.162px;text-decoration:underline;">policyinnstilling </span>
<div class="clip" style="left:270px;top:102px;width:196px;height:623px;">
<span class="t" style="left:5.5px;top:83px;font-size:12px;line-height:16px;letter-spacing:-0.600px;">Krav:</span>
<span class="t" style="left:5.5px;top:98px;font-size:12px;line-height:16px;letter-spacing:-0.232px;">Minst Windows Server 2012 eller</span>
<span class="t" style="left:5.5px;top:113px;font-size:12px;line-height:16px;letter-spacing:-0.154px;">Windows 8</span>
<span class="t" style="left:5.5px;top:143px;font-size:12px;line-height:16px;letter-spacing:-0.499px;">Beskrivelse:</span>
<span class="t" style="left:5.5px;top:158px;font-size:12px;line-height:16px;letter-spacing:0.047px;">Med denne policyinnstillingen kan</span>
<span class="t" style="left:5.5px;top:173px;font-size:12px;line-height:16px;letter-spacing:0.029px;">du konfigurere krypteringstypen</span>
<span class="t" style="left:5.5px;top:188px;font-size:12px;line-height:16px;letter-spacing:-0.185px;">som skal brukes av BitLocker-</span>
<span class="t" style="left:5.5px;top:203px;font-size:12px;line-height:16px;letter-spacing:-0.106px;">stasjonskryptering. Denne</span>
<span class="t" style="left:5.5px;top:218px;font-size:12px;line-height:16px;letter-spacing:0.033px;">policyinnstillingen brukes når du</span>
<span class="t" style="left:5.5px;top:233px;font-size:12px;line-height:16px;letter-spacing:-0.147px;">aktiverer BitLocker. Endring av</span>
<span class="t" style="left:5.5px;top:248px;font-size:12px;line-height:16px;">krypteringstypen får ingen</span>
<span class="t" style="left:5.5px;top:263px;font-size:12px;line-height:16px;letter-spacing:-0.108px;">virkning hvis stasjonen allerede er</span>
<span class="t" style="left:5.5px;top:278px;font-size:12px;line-height:16px;letter-spacing:-0.017px;">kryptert eller kryptering pågår.</span>
<span class="t" style="left:5.5px;top:293px;font-size:12px;line-height:16px;letter-spacing:-0.100px;">Velg full kryptering for å kreve at</span>
<span class="t" style="left:5.5px;top:308px;font-size:12px;line-height:16px;letter-spacing:-0.232px;">hele stasjonen skal krypteres når</span>
<span class="t" style="left:5.5px;top:323px;font-size:12px;line-height:16px;letter-spacing:-0.205px;">BitLocker aktiveres. Velg bare</span>
<span class="t" style="left:5.5px;top:338px;font-size:12px;line-height:16px;letter-spacing:-0.065px;">kryptering av brukt plass for å</span>
<span class="t" style="left:5.5px;top:353px;font-size:12px;line-height:16px;letter-spacing:-0.220px;">kreve at bare den delen av</span>
<span class="t" style="left:5.5px;top:368px;font-size:12px;line-height:16px;letter-spacing:-0.148px;">stasjonen som brukes til å lagre</span>
<span class="t" style="left:5.5px;top:383px;font-size:12px;line-height:16px;letter-spacing:-0.260px;">data, skal krypteres når BitLocker</span>
<span class="t" style="left:5.5px;top:398px;font-size:12px;line-height:16px;letter-spacing:-0.286px;">aktiveres.</span>
<span class="t" style="left:5.5px;top:428px;font-size:12px;line-height:16px;letter-spacing:-0.121px;">Hvis du aktiverer denne</span>
<span class="t" style="left:5.5px;top:443px;font-size:12px;line-height:16px;letter-spacing:0.121px;">policyinnstillingen, blir</span>
<span class="t" style="left:5.5px;top:458px;font-size:12px;line-height:16px;letter-spacing:-0.048px;">krypteringstypen som BitLocker</span>
<span class="t" style="left:5.5px;top:473px;font-size:12px;line-height:16px;letter-spacing:-0.110px;">bruker til å kryptere stasjoner,</span>
<span class="t" style="left:5.5px;top:488px;font-size:12px;line-height:16px;letter-spacing:-0.056px;">definert ved hjelp av denne</span>
<span class="t" style="left:5.5px;top:503px;font-size:12px;line-height:16px;letter-spacing:0.108px;">policyinnstillingen, og</span>
<span class="t" style="left:5.5px;top:518px;font-size:12px;line-height:16px;letter-spacing:0.025px;">krypteringstypealternativet blir</span>
<span class="t" style="left:5.5px;top:533px;font-size:12px;line-height:16px;letter-spacing:-0.128px;">ikke presentert i veiviseren for</span>
<span class="t" style="left:5.5px;top:548px;font-size:12px;line-height:16px;letter-spacing:-0.066px;">BitLocker-installasjon.</span>
<span class="t" style="left:5.5px;top:578px;font-size:12px;line-height:16px;letter-spacing:-0.148px;">Hvis du deaktiverer eller lar være å</span>
<span class="t" style="left:5.5px;top:593px;font-size:12px;line-height:16px;letter-spacing:-0.032px;">konfigurere denne</span>
<span class="t" style="left:5.5px;top:608px;font-size:12px;line-height:16px;letter-spacing:-0.023px;">policyinnstillingen, vil veiviseren</span>
</div>
<div style="left:466px;top:140px;width:15px;height:586px;background:#f0f0f0;"></div>
<div style="left:466px;top:174px;width:15px;height:420px;background:#cdcdcd;"></div>
<svg style="left:468px;top:157px" width="12" height="8" viewBox="0 0 12 8"><path d="M1 7L6.0 1.2L11 7" fill="none" stroke="#555" stroke-width="2.2"/></svg>
<div style="left:482px;top:102px;width:882px;height:23px;background:#fcfcfc;"></div>
<div style="left:482px;top:125px;width:882px;height:1px;background:#e0ecf9;"></div>
<div style="left:832px;top:103px;width:1px;height:22px;background:#e3edf8;"></div>
<div style="left:932px;top:103px;width:1px;height:22px;background:#e3edf8;"></div>
<div style="left:1131px;top:103px;width:1px;height:22px;background:#e3edf8;"></div>
<span class="t" style="left:488px;top:106px;font-size:12px;line-height:16px;letter-spacing:0.124px;">Innstilling</span>
<span class="t" style="left:861px;top:106px;font-size:12px;line-height:16px;letter-spacing:-0.010px;">Tilstand</span>
<span class="t" style="left:1000px;top:106px;font-size:12px;line-height:16px;letter-spacing:0.108px;">Kommentar</span>
<svg style="left:487px;top:128px" width="13" height="15" viewBox="0 0 13 15"><path d="M.5 .5h8.500l3.500 3.500v10.500h-12z" fill="#fff" stroke="#8c8c8c"/><path d="M9 .5v3.500h3.500" fill="#fff" stroke="#8c8c8c" stroke-width=".9"/><path d="M3 5.500h2M3 11.500h2" stroke="#15152c" stroke-width="2"/><path d="M3 8.500h2" stroke="#6a62a8" stroke-width="1.200"/><path d="M6.500 5.500h3.500M6.500 8.500h3.500M6.500 11.500h3.500" stroke="#60608c" stroke-width="1"/></svg>
<span class="t" style="left:504px;top:128px;font-size:12px;line-height:16px;letter-spacing:-0.008px;">Tillat opplåsing av nettverk ved oppstart</span>
<span class="t" style="left:840.3px;top:128px;font-size:12px;line-height:16px;letter-spacing:0.028px;">Ikke konfigurert</span>
<span class="t" style="left:1023px;top:128px;font-size:12px;line-height:16px;">Nei</span>
<svg style="left:487px;top:147px" width="13" height="15" viewBox="0 0 13 15"><path d="M.5 .5h8.500l3.500 3.500v10.500h-12z" fill="#fff" stroke="#8c8c8c"/><path d="M9 .5v3.500h3.500" fill="#fff" stroke="#8c8c8c" stroke-width=".9"/><path d="M3 5.500h2M3 11.500h2" stroke="#15152c" stroke-width="2"/><path d="M3 8.500h2" stroke="#6a62a8" stroke-width="1.200"/><path d="M6.500 5.500h3.500M6.500 8.500h3.500M6.500 11.500h3.500" stroke="#60608c" stroke-width="1"/></svg>
<span class="t" style="left:504px;top:147px;font-size:12px;line-height:16px;letter-spacing:0.029px;">Tillat integritetsvalidering for sikker oppstart</span>
<span class="t" style="left:840.3px;top:147px;font-size:12px;line-height:16px;letter-spacing:0.028px;">Ikke konfigurert</span>
<span class="t" style="left:1023px;top:147px;font-size:12px;line-height:16px;">Nei</span>
<svg style="left:487px;top:166px" width="13" height="15" viewBox="0 0 13 15"><path d="M.5 .5h8.500l3.500 3.500v10.500h-12z" fill="#fff" stroke="#8c8c8c"/><path d="M9 .5v3.500h3.500" fill="#fff" stroke="#8c8c8c" stroke-width=".9"/><path d="M3 5.500h2M3 11.500h2" stroke="#15152c" stroke-width="2"/><path d="M3 8.500h2" stroke="#6a62a8" stroke-width="1.200"/><path d="M6.500 5.500h3.500M6.500 8.500h3.500M6.500 11.500h3.500" stroke="#60608c" stroke-width="1"/></svg>
<span class="t" style="left:504px;top:166px;font-size:12px;line-height:16px;letter-spacing:-0.062px;">Krev ekstra godkjenning ved oppstart</span>
<span class="t" style="left:861px;top:166px;font-size:12px;line-height:16px;letter-spacing:0.086px;">Aktivert</span>
<span class="t" style="left:1023px;top:166px;font-size:12px;line-height:16px;">Nei</span>
<svg style="left:487px;top:185px" width="13" height="15" viewBox="0 0 13 15"><path d="M.5 .5h8.500l3.500 3.500v10.500h-12z" fill="#fff" stroke="#8c8c8c"/><path d="M9 .5v3.500h3.500" fill="#fff" stroke="#8c8c8c" stroke-width=".9"/><path d="M3 5.500h2M3 11.500h2" stroke="#15152c" stroke-width="2"/><path d="M3 8.500h2" stroke="#6a62a8" stroke-width="1.200"/><path d="M6.500 5.500h3.500M6.500 8.500h3.500M6.500 11.500h3.500" stroke="#60608c" stroke-width="1"/></svg>
<span class="t" style="left:504px;top:185px;font-size:12px;line-height:16px;letter-spacing:-0.175px;">Krev ekstra godkjenning ved oppstart (Windows Server 2008 ...</span>
<span class="t" style="left:840.3px;top:185px;font-size:12px;line-height:16px;letter-spacing:0.028px;">Ikke konfigurert</span>
<span class="t" style="left:1023px;top:185px;font-size:12px;line-height:16px;">Nei</span>
<svg style="left:487px;top:204px" width="13" height="15" viewBox="0 0 13 15"><path d="M.5 .5h8.500l3.500 3.500v10.500h-12z" fill="#fff" stroke="#8c8c8c"/><path d="M9 .5v3.500h3.500" fill="#fff" stroke="#8c8c8c" stroke-width=".9"/><path d="M3 5.500h2M3 11.500h2" stroke="#15152c" stroke-width="2"/><path d="M3 8.500h2" stroke="#6a62a8" stroke-width="1.200"/><path d="M6.500 5.500h3.500M6.500 8.500h3.500M6.500 11.500h3.500" stroke="#60608c" stroke-width="1"/></svg>
<span class="t" style="left:504px;top:204px;font-size:12px;line-height:16px;letter-spacing:-0.110px;">Ikke tillat standardbrukere å endre PIN-koden eller passordet</span>
<span class="t" style="left:840.3px;top:204px;font-size:12px;line-height:16px;letter-spacing:0.028px;">Ikke konfigurert</span>
<span class="t" style="left:1023px;top:204px;font-size:12px;line-height:16px;">Nei</span>
<svg style="left:487px;top:223px" width="13" height="15" viewBox="0 0 13 15"><path d="M.5 .5h8.500l3.500 3.500v10.500h-12z" fill="#fff" stroke="#8c8c8c"/><path d="M9 .5v3.500h3.500" fill="#fff" stroke="#8c8c8c" stroke-width=".9"/><path d="M3 5.500h2M3 11.500h2" stroke="#15152c" stroke-width="2"/><path d="M3 8.500h2" stroke="#6a62a8" stroke-width="1.200"/><path d="M6.500 5.500h3.500M6.500 8.500h3.500M6.500 11.500h3.500" stroke="#60608c" stroke-width="1"/></svg>
<span class="t" style="left:504px;top:223px;font-size:12px;line-height:16px;letter-spacing:-0.008px;">Aktiver bruken av BitLocker-godkjenning som krever inndat...</span>
<span class="t" style="left:840.3px;top:223px;font-size:12px;line-height:16px;letter-spacing:0.028px;">Ikke konfigurert</span>
<span class="t" style="left:1023px;top:223px;font-size:12px;line-height:16px;">Nei</span>
<svg style="left:487px;top:242px" width="13" height="15" viewBox="0 0 13 15"><path d="M.5 .5h8.500l3.500 3.500v10.500h-12z" fill="#fff" stroke="#8c8c8c"/><path d="M9 .5v3.500h3.500" fill="#fff" stroke="#8c8c8c" stroke-width=".9"/><path d="M3 5.500h2M3 11.500h2" stroke="#15152c" stroke-width="2"/><path d="M3 8.500h2" stroke="#6a62a8" stroke-width="1.200"/><path d="M6.500 5.500h3.500M6.500 8.500h3.500M6.500 11.500h3.500" stroke="#60608c" stroke-width="1"/></svg>
<span class="t" style="left:504px;top:242px;font-size:12px;line-height:16px;letter-spacing:0.050px;">Tillat utvidede PIN-koder for oppstart</span>
<span class="t" style="left:861px;top:242px;font-size:12px;line-height:16px;letter-spacing:0.086px;">Aktivert</span>
<span class="t" style="left:1023px;top:242px;font-size:12px;line-height:16px;">Nei</span>
<svg style="left:487px;top:261px" width="13" height="15" viewBox="0 0 13 15"><path d="M.5 .5h8.500l3.500 3.500v10.500h-12z" fill="#fff" stroke="#8c8c8c"/><path d="M9 .5v3.500h3.500" fill="#fff" stroke="#8c8c8c" stroke-width=".9"/><path d="M3 5.500h2M3 11.500h2" stroke="#15152c" stroke-width="2"/><path d="M3 8.500h2" stroke="#6a62a8" stroke-width="1.200"/><path d="M6.500 5.500h3.500M6.500 8.500h3.500M6.500 11.500h3.500" stroke="#60608c" stroke-width="1"/></svg>
<span class="t" style="left:504px;top:261px;font-size:12px;line-height:16px;letter-spacing:0.122px;">Konfigurer minimum PIN-lengde for oppstart</span>
<span class="t" style="left:861px;top:261px;font-size:12px;line-height:16px;letter-spacing:0.086px;">Aktivert</span>
<span class="t" style="left:1023px;top:261px;font-size:12px;line-height:16px;">Nei</span>
<svg style="left:487px;top:280px" width="13" height="15" viewBox="0 0 13 15"><path d="M.5 .5h8.500l3.500 3.500v10.500h-12z" fill="#fff" stroke="#8c8c8c"/><path d="M9 .5v3.500h3.500" fill="#fff" stroke="#8c8c8c" stroke-width=".9"/><path d="M3 5.500h2M3 11.500h2" stroke="#15152c" stroke-width="2"/><path d="M3 8.500h2" stroke="#6a62a8" stroke-width="1.200"/><path d="M6.500 5.500h3.500M6.500 8.500h3.500M6.500 11.500h3.500" stroke="#60608c" stroke-width="1"/></svg>
<span class="t" style="left:504px;top:280px;font-size:12px;line-height:16px;letter-spacing:-0.026px;">Konfigurer bruk av maskinvarebasert kryptering for operativ...</span>
<span class="t" style="left:861px;top:280px;font-size:12px;line-height:16px;letter-spacing:0.086px;">Aktivert</span>
<span class="t" style="left:1023px;top:280px;font-size:12px;line-height:16px;">Nei</span>
<div style="left:502px;top:297px;width:630px;height:19px;background:#f0f0f0;"></div>
<svg style="left:487px;top:299px" width="13" height="15" viewBox="0 0 13 15"><path d="M.5 .5h8.500l3.500 3.500v10.500h-12z" fill="#cfe3fa" stroke="#6f90bf"/><path d="M9 .5v3.500h3.500" fill="#fff" stroke="#6f90bf" stroke-width=".9"/><path d="M3 5.500h2M3 11.500h2" stroke="#15152c" stroke-width="2"/><path d="M3 8.500h2" stroke="#6a62a8" stroke-width="1.200"/><path d="M6.500 5.500h3.500M6.500 8.500h3.500M6.500 11.500h3.500" stroke="#60608c" stroke-width="1"/></svg>
<span class="t" style="left:504px;top:299px;font-size:12px;line-height:16px;letter-spacing:-0.061px;">Aktiver type stasjonskryptering på operativsystemstasjoner</span>
<span class="t" style="left:861px;top:299px;font-size:12px;line-height:16px;letter-spacing:0.086px;">Aktivert</span>
<span class="t" style="left:1023px;top:299px;font-size:12px;line-height:16px;">Nei</span>
<svg style="left:487px;top:318px" width="13" height="15" viewBox="0 0 13 15"><path d="M.5 .5h8.500l3.500 3.500v10.500h-12z" fill="#fff" stroke="#8c8c8c"/><path d="M9 .5v3.500h3.500" fill="#fff" stroke="#8c8c8c" stroke-width=".9"/><path d="M3 5.500h2M3 11.500h2" stroke="#15152c" stroke-width="2"/><path d="M3 8.500h2" stroke="#6a62a8" stroke-width="1.200"/><path d="M6.500 5.500h3.500M6.500 8.500h3.500M6.500 11.500h3.500" stroke="#60608c" stroke-width="1"/></svg>
<div style="left:268px;top:726px;width:1098px;height:19px;background:#f0f0f0;"></div>
<div style="left:391px;top:726px;width:975px;height:1px;background:#696969;"></div>
<div style="left:482px;top:724px;width:882px;height:1px;background:#e3e3e3;"></div>
<svg style="left:266px;top:724px" width="130" height="22" viewBox="0 0 130 22"><path d="M2 1L11 21H57L64 3z" fill="#fff"/><path d="M64.500 3.500H125.500" stroke="#696969" fill="none"/><path d="M2.500 1L11 20.500M57.500 20.500L64.500 3.500M61 11L65.500 20.500M125.500 3.500L118.500 20.500" stroke="#555" stroke-width="1" fill="none"/></svg>
<span class="t" style="left:280px;top:728px;font-size:12px;line-height:16px;">Utvidet</span>
<span class="t" style="left:334px;top:728px;font-size:12px;line-height:16px;letter-spacing:-0.275px;">Standard</span>
<div style="left:441px;top:319px;width:700px;height:460px;background:#939393;border:1px solid #7c7c7c;box-shadow:0 0 7px rgba(0,0,0,.12);"></div>
<div style="left:448px;top:349px;width:686px;height:432px;background:#808080;"></div>
<div style="left:449px;top:350px;width:684px;height:430px;background:#f0f0f0;"></div>
<svg style="left:451px;top:326px" width="16" height="16" viewBox="0 0 16 16"><rect x="3.500" y="1.500" width="12" height="9.500" rx=".8" fill="#dedac6" stroke="#b9b4a0" stroke-width=".8"/><rect x="5" y="3" width="9.500" height="6.500" fill="#1530d0"/><path d="M9.500 3h3l-1 6.500h-3z" fill="#7d97f2" opacity=".85"/><path d="M9 11.500h3v1.500h-3z" fill="#b8b8b8"/><path d="M8.500 14h5" stroke="#c8c8c8" stroke-width="1.200"/><ellipse cx="3.300" cy="6" rx="2.100" ry="2.600" fill="#c79c6a"/><path d="M1.200 5.200c0-2.600 4.200-2.600 4.200 0c-1.200-.9-3-.9-4.200 0z" fill="#4a3a2c"/><path d="M0 15.500c0-5.600 8-5.600 8 0z" fill="#7cb2e6"/><path d="M2.500 10.500l1 2.500 1-2.500z" fill="#e8f0fa"/></svg>
<span class="t" style="left:598px;top:325px;font-size:15px;line-height:20px;color:#3a3a3a;letter-spacing:-0.072px;">Aktiver type stasjonskryptering på operativsystemstasjoner</span>
<div style="left:1089px;top:320px;width:45px;height:20px;background:#c75050;"></div>
<svg style="left:1107px;top:327px" width="9" height="8" viewBox="0 0 9 8"><path d="M.8 .6l7.400 6.800M8.200 .6l-7.400 6.800" stroke="#fff" stroke-width="1.600" fill="none"/></svg>
<div style="left:1071px;top:326px;width:10px;height:8px;border:1px solid #1e1e1e;border-top-width:2px;"></div>
<div style="left:1045px;top:332px;width:8px;height:2px;background:#6e6e6e;"></div>
<svg style="left:455px;top:364px" width="16" height="16" viewBox="0 0 16 16"><rect x=".5" y=".5" width="15" height="15" fill="#dcdce6" stroke="#4c4c4c"/><rect x="1" y="1" width="14" height="2.500" fill="#7d7ab2"/><rect x="0" y="0" width="2" height="3" fill="#1f8a86"/><rect x="14" y="0" width="2" height="3" fill="#1f8a86"/><rect x="1" y="3.500" width="14" height="1.500" fill="#2c2c2c"/><rect x="9" y="3.500" width="4" height="1.500" fill="#f2c230"/><rect x="1" y="5" width="14" height="10" fill="#6c6c6c"/><circle cx="5.200" cy="10.300" r="4" fill="#e6e8ee" stroke="#9a9aa8" stroke-width=".6"/><circle cx="5.200" cy="10.300" r="1" fill="#6c6c6c"/><path d="M5.200 6.300a4 4 0 0 1 3.500 2l-3.500 2z" fill="#c9e6c4" opacity=".8"/><path d="M1.700 12.300a4 4 0 0 0 3.500 2v-4z" fill="#e6c9e0" opacity=".8"/><rect x="8.500" y="6.500" width="6" height="7.500" fill="#f7eaa6" stroke="#c2a84e" stroke-width=".7"/><path d="M10 9h3.500M10 11h3.500" stroke="#8d7c3c" stroke-width=".9"/><rect x="0" y="14" width="2" height="2" fill="#1f8a86"/><rect x="14" y="14" width="2" height="2" fill="#1f8a86"/></svg>
<span class="t" style="left:479px;top:362px;font-size:12px;line-height:16px;letter-spacing:-0.071px;">Aktiver type stasjonskryptering på operativsystemstasjoner</span>
<div style="left:824px;top:365px;width:107px;height:26px;background:linear-gradient(#f2f2f2,#e6e6e6);border:1px solid #acacac;"></div>
<span class="t" style="left:832.4px;top:370px;font-size:12px;line-height:16px;letter-spacing:0.037px;">Forrige innstilling</span>
<div style="left:939px;top:365px;width:107px;height:26px;background:linear-gradient(#f2f2f2,#e6e6e6);border:1px solid #acacac;"></div>
<span class="t" style="left:950.4px;top:370px;font-size:12px;line-height:16px;letter-spacing:0.009px;">Neste innstilling</span>
<svg style="left:458px;top:411px" width="13" height="13" viewBox="0 0 13 13"><circle cx="6.500" cy="6.500" r="6" fill="#fff" stroke="#404040"/></svg>
<svg style="left:458px;top:439px" width="13" height="13" viewBox="0 0 13 13"><circle cx="6.500" cy="6.500" r="6" fill="#fff" stroke="#404040"/><circle cx="6.500" cy="6.500" r="3.300" fill="#1a1a1a"/></svg>
<svg style="left:458px;top:467px" width="13" height="13" viewBox="0 0 13 13"><circle cx="6.500" cy="6.500" r="6" fill="#fff" stroke="#404040"/></svg>
<span class="t" style="left:475.5px;top:410px;font-size:12px;line-height:16px;letter-spacing:0.028px;">Ikke konfigurert</span>
<span class="t" style="left:475.5px;top:438px;font-size:12px;line-height:16px;letter-spacing:0.086px;">Aktivert</span>
<span class="t" style="left:475.5px;top:466px;font-size:12px;line-height:16px;letter-spacing:-0.133px;">Deaktivert</span>
<span class="t" style="left:581px;top:405px;font-size:12px;line-height:16px;letter-spacing:-0.216px;">Kommentar:</span>
<span class="t" style="left:581px;top:483px;font-size:12px;line-height:16px;letter-spacing:-0.342px;">Støttes av:</span>
<div style="left:656px;top:407px;width:468px;height:72px;background:#fff;border:1px solid #abadb3;"></div>
<div style="left:1106px;top:408px;width:17px;height:70px;background:#f0f0f0;"></div>
<svg style="left:1109px;top:416px" width="9" height="6" viewBox="0 0 9 6"><path d="M1 5L4.5 1.2L8 5" fill="none" stroke="#bfbfbf" stroke-width="1.5"/></svg>
<svg style="left:1109px;top:464px" width="9" height="6" viewBox="0 0 9 6"><path d="M1 1L4.5 4.8L8 1" fill="none" stroke="#bfbfbf" stroke-width="1.5"/></svg>
<div style="left:656px;top:485px;width:468px;height:46px;background:#f0f0f0;border:1px solid #abadb3;"></div>
<svg style="left:1109px;top:493px" width="9" height="6" viewBox="0 0 9 6"><path d="M1 5L4.5 1.2L8 5" fill="none" stroke="#bfbfbf" stroke-width="1.5"/></svg>
<svg style="left:1109px;top:517px" width="9" height="6" viewBox="0 0 9 6"><path d="M1 1L4.5 4.8L8 1" fill="none" stroke="#bfbfbf" stroke-width="1.5"/></svg>
<span class="t" style="left:662px;top:488px;font-size:12px;line-height:16px;letter-spacing:-0.188px;">Minst Windows Server 2012 eller Windows 8</span>
<span class="t" style="left:454px;top:544px;font-size:12px;line-height:16px;">Alternativer:</span>
<span class="t" style="left:760px;top:544px;font-size:12px;line-height:16px;">Hjelp:</span>
<div style="left:452px;top:580px;width:298px;height:200px;background:#fff;border:1px solid #7a7a7a;"></div>
<span class="t" style="left:458px;top:587px;font-size:12px;line-height:16px;">Velg krypteringstypen:</span>
<div style="left:456px;top:610px;width:214px;height:23px;background:linear-gradient(#f2f2f2,#e5e5e5);border:1px solid #acacac;"></div>
<span class="t" style="left:460px;top:614px;font-size:12px;line-height:16px;letter-spacing:-0.135px;">Bare kryptering av brukt plass</span>
<svg style="left:656px;top:618px" width="9" height="6" viewBox="0 0 9 6"><path d="M1 1L4.5 4.8L8 1" fill="none" stroke="#444" stroke-width="1.6"/></svg>
<div style="left:758px;top:580px;width:353px;height:200px;background:#fff;border:1px solid #7a7a7a;"></div>
<span class="t" style="left:763px;top:582px;font-size:12px;line-height:16px;letter-spacing:0.069px;">Med denne policyinnstillingen kan du konfigurere</span>
<span class="t" style="left:763px;top:597px;font-size:12px;line-height:16px;letter-spacing:-0.090px;">krypteringstypen som skal brukes av BitLocker-</span>
<span class="t" style="left:763px;top:612px;font-size:12px;line-height:16px;letter-spacing:-0.023px;">stasjonskryptering. Denne policyinnstillingen brukes når du</span>
<span class="t" style="left:763px;top:627px;font-size:12px;line-height:16px;letter-spacing:-0.061px;">aktiverer BitLocker. Endring av krypteringstypen får ingen</span>
<span class="t" style="left:763px;top:642px;font-size:12px;line-height:16px;letter-spacing:-0.052px;">virkning hvis stasjonen allerede er kryptert eller kryptering pågår.</span>
<span class="t" style="left:763px;top:657px;font-size:12px;line-height:16px;letter-spacing:-0.104px;">Velg full kryptering for å kreve at hele stasjonen skal krypteres når</span>
<span class="t" style="left:763px;top:672px;font-size:12px;line-height:16px;letter-spacing:-0.135px;">BitLocker aktiveres. Velg bare kryptering av brukt plass for å kreve</span>
<span class="t" style="left:763px;top:687px;font-size:12px;line-height:16px;letter-spacing:-0.169px;">at bare den delen av stasjonen som brukes til å lagre data, skal</span>
<span class="t" style="left:763px;top:702px;font-size:12px;line-height:16px;letter-spacing:-0.196px;">krypteres når BitLocker aktiveres.</span>
<span class="t" style="left:763px;top:732px;font-size:12px;line-height:16px;letter-spacing:0.028px;">Hvis du aktiverer denne policyinnstillingen, blir krypteringstypen</span>
<span class="t" style="left:763px;top:747px;font-size:12px;line-height:16px;letter-spacing:-0.075px;">som BitLocker bruker til å kryptere stasjoner, definert ved hjelp av</span>
<span class="t" style="left:763px;top:762px;font-size:12px;line-height:16px;letter-spacing:-0.023px;">denne policyinnstillingen, og krypteringstypealternativet blir ikke</span>
<div style="left:1112px;top:597px;width:15px;height:180px;background:#cdcdcd;"></div>
<svg style="left:1115px;top:586px" width="9" height="6" viewBox="0 0 9 6"><path d="M1 5L4.5 1.2L8 5" fill="none" stroke="#555" stroke-width="1.8"/></svg>
</body></html>
